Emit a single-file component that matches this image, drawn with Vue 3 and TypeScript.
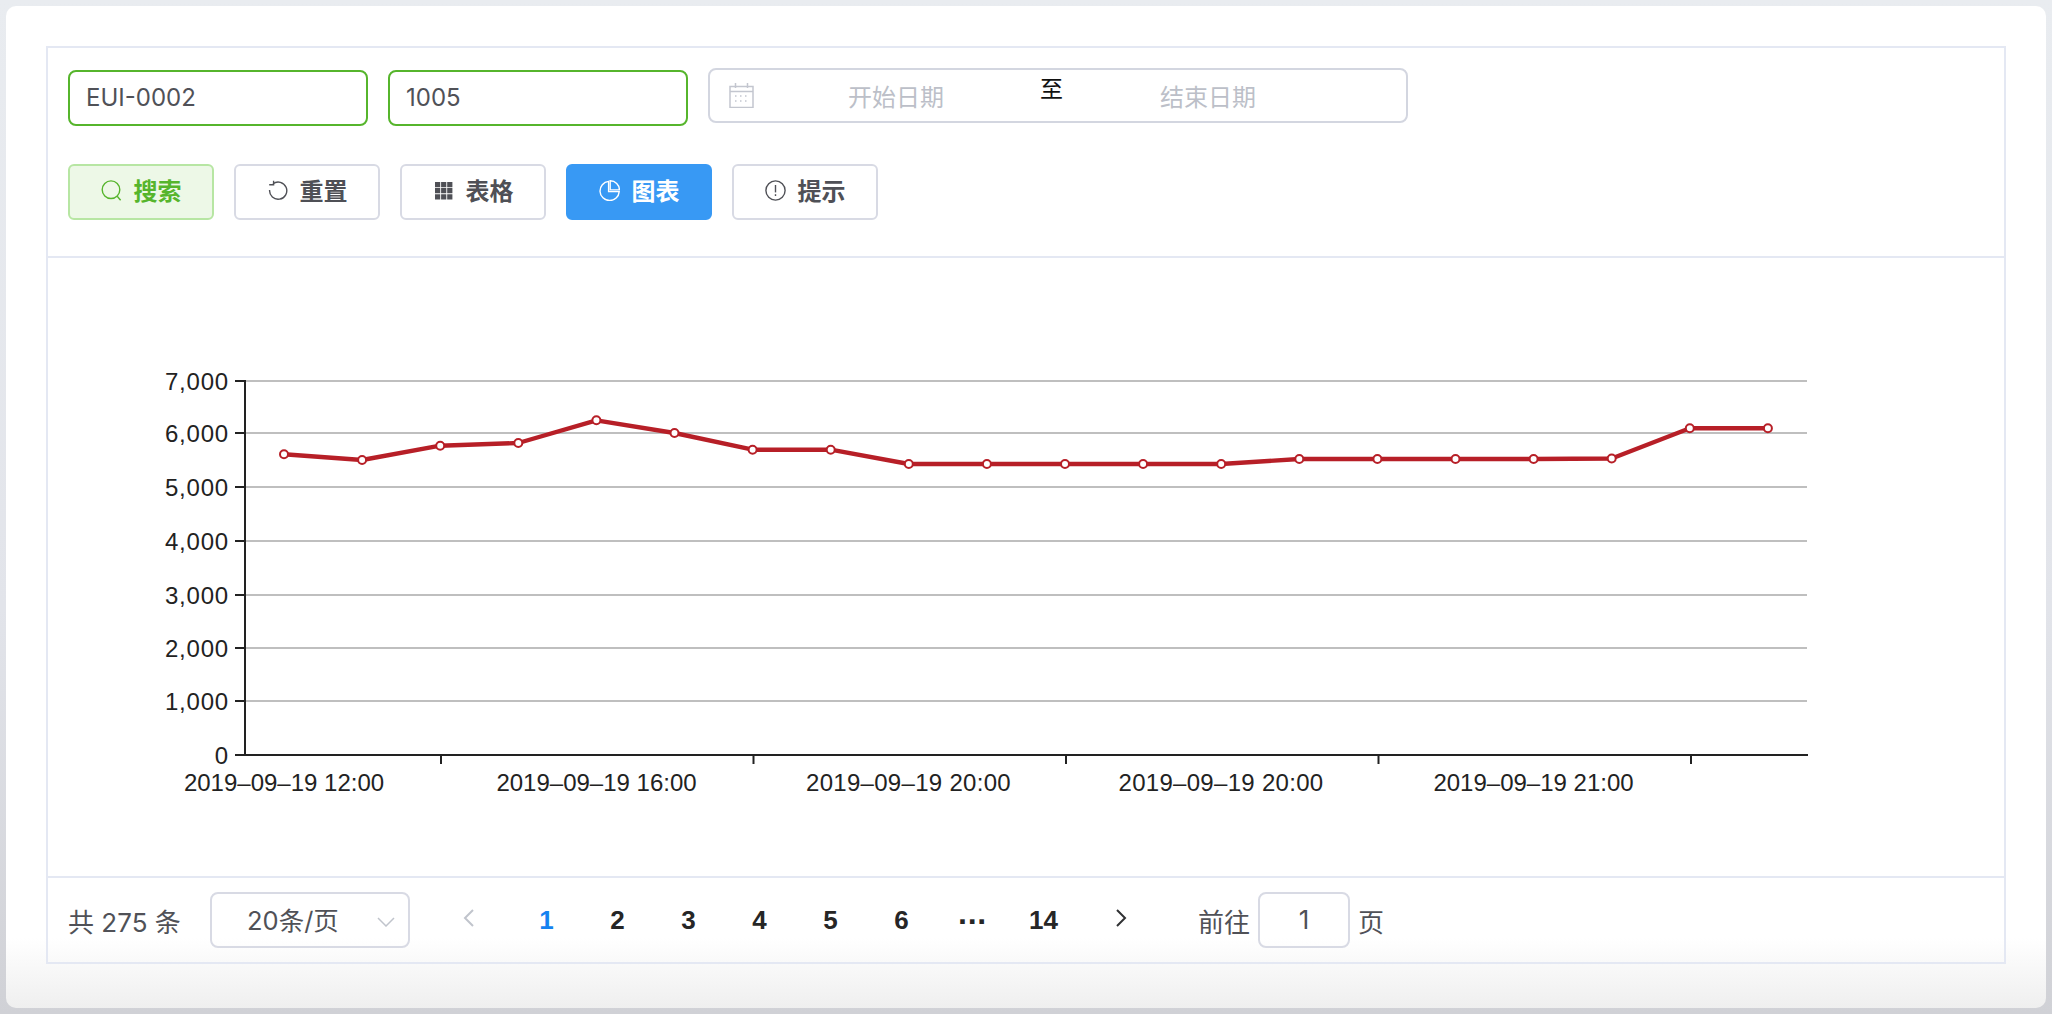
<script setup lang="ts">
const buttons = [
  { label: '搜索', icon: 'search', kind: 'success' },
  { label: '重置', icon: 'refresh', kind: '' },
  { label: '表格', icon: 'grid', kind: '' },
  { label: '图表', icon: 'pie', kind: 'primary' },
  { label: '提示', icon: 'warning', kind: '' },
]
const gridY = [381, 433, 487, 541, 595, 648, 701]
const yLabels = [
  { t: '7,000', y: 381 }, { t: '6,000', y: 433 }, { t: '5,000', y: 487 }, { t: '4,000', y: 541 },
  { t: '3,000', y: 595 }, { t: '2,000', y: 648 }, { t: '1,000', y: 701 }, { t: '0', y: 755 },
]
const xTicks = [441, 753.5, 1066, 1378.5, 1691]
const xLabels = [
  { t: '2019–09–19 12:00', x: 284, wide: false },
  { t: '2019–09–19 16:00', x: 596.5, wide: false },
  { t: '2019–09–19 20:00', x: 908.5, wide: true },
  { t: '2019–09–19 20:00', x: 1221, wide: true },
  { t: '2019–09–19 21:00', x: 1533.5, wide: false },
]
const ys = [454.3, 460, 445.7, 443, 420.3, 433, 449.7, 449.7, 464, 464, 464, 464, 464, 459, 459, 459, 459, 458.5, 428.3, 428.3]
const points = ys.map((y, i) => ({ x: 284 + 78.1 * i, y }))
const line = points.map((p) => `${p.x},${p.y}`).join(' ')
const pages = ['1', '2', '3', '4', '5', '6', '···', '14']
</script>

<template>
  <main class="card">
    <section class="box">
      <header class="toolbar">
        <div class="filters">
          <div class="input focus">EUI-0002</div>
          <div class="input focus">1005</div>
          <div class="range">
            <svg class="cal" viewBox="0 0 25 25" fill="none" stroke="#c3c6cf" stroke-width="1.5">
              <rect x="1" y="3.5" width="23" height="21" />
              <path d="M1 8.5h23M6.5 0v5M18.5 0v5" />
              <path d="M6 13h3M11 13h3M16 13h3M6 18h3M11 18h3M16 18h3" stroke-dasharray="1.5 1.5" />
            </svg>
            <span class="ph ph1">开始日期</span>
            <span class="sep">至</span>
            <span class="ph ph2">结束日期</span>
          </div>
        </div>
        <div class="actions">
          <button v-for="b in buttons" :key="b.label" class="btn" :class="b.kind">
            <svg class="ico" viewBox="0 0 21 21" fill="none" stroke="currentColor" stroke-width="1.4">
              <template v-if="b.icon === 'search'">
                <circle cx="10" cy="9.7" r="8.8" />
                <path d="M16.2 16.2l3.4 4" />
              </template>
              <template v-else-if="b.icon === 'refresh'">
                <path d="M6 3.8A8.6 8.6 0 1 1 2.6 10" />
                <path d="M6.6 0.8v4H2.2" />
              </template>
              <template v-else-if="b.icon === 'grid'">
                <path fill="currentColor" stroke="none" d="M2 2h5.2v5.2H2zM8.1 2h5.2v5.2H8.1zM14.2 2h5.2v5.2h-5.2zM2 8.1h5.2v5.2H2zM8.1 8.1h5.2v5.2H8.1zM14.2 8.1h5.2v5.2h-5.2zM2 14.2h5.2v5.2H2zM8.1 14.2h5.2v5.2H8.1zM14.2 14.2h5.2v5.2h-5.2z" />
              </template>
              <template v-else-if="b.icon === 'pie'">
                <path d="M9.6 1.4A9.6 9.6 0 1 0 20.2 11.6H9.6z" />
                <path d="M11.2 0.7A9.2 9.2 0 0 1 20.4 9.9h-9.2z" />
              </template>
              <template v-else>
                <circle cx="10.5" cy="10.5" r="9.6" />
                <path d="M10.5 5v7.4" />
                <path d="M10.5 14.2v1.8" />
              </template>
            </svg>
            <span class="btn-text">{{ b.label }}</span>
          </button>
        </div>
      </header>

      <div class="chart">
        <svg class="plot" viewBox="48 258 1956 618">
          <line v-for="y in gridY" :key="y" x1="246" :y1="y" x2="1807" :y2="y" stroke="#bfbfbf" stroke-width="2" />
          <path d="M245 380v376" stroke="#222" stroke-width="2" fill="none" />
          <path d="M235 755H1808" stroke="#222" stroke-width="2" fill="none" />
          <line v-for="l in yLabels" :key="l.t" x1="235" :y1="l.y" x2="245" :y2="l.y" stroke="#222" stroke-width="2" />
          <line v-for="x in xTicks" :key="x" :x1="x" y1="755" :x2="x" y2="764" stroke="#222" stroke-width="2" />
          <text v-for="l in yLabels" :key="'y' + l.t" x="229" :y="l.y + 8.5" class="tick ylab" text-anchor="end">{{ l.t }}</text>
          <text v-for="(l, i) in xLabels" :key="i" :x="l.x" y="790.5" class="tick" :class="{ wide: l.wide }" text-anchor="middle">{{ l.t }}</text>
          <polyline :points="line" fill="none" stroke="#b71f27" stroke-width="4.4" stroke-linejoin="round" />
          <circle v-for="(p, i) in points" :key="i" :cx="p.x" :cy="p.y" r="4" fill="#fff" stroke="#b71f27" stroke-width="2" />
        </svg>
      </div>

      <footer class="pager">
        <span class="total">共 275 条</span>
        <div class="size">
          <span>20条/页</span>
          <svg class="caret" viewBox="0 0 18 10" fill="none" stroke="#c0c4cc" stroke-width="1.5"><path d="M1 1l8 8 8-8" /></svg>
        </div>
        <svg class="prev" viewBox="0 0 11 18" fill="none" stroke="#c0c4cc" stroke-width="2"><path d="M10 1L2 9l8 8" /></svg>
        <ul class="pages">
          <li v-for="(p, i) in pages" :key="p" :class="{ active: i === 0, more: p === '···' }">{{ p }}</li>
        </ul>
        <svg class="next" viewBox="0 0 11 18" fill="none" stroke="#303133" stroke-width="2"><path d="M1 1l8 8-8 8" /></svg>
        <span class="goto">前往</span>
        <div class="jump">1</div>
        <span class="unit">页</span>
      </footer>
    </section>
  </main>
</template>

<style scoped>
.card {
  box-sizing: border-box;
  width: 2040px;
  height: 1002px;
  margin: 6px;
  padding: 40px 40px 44px;
  border-radius: 10px;
  background: linear-gradient(to bottom, #fff 0, #fff 93%, #efefef 100%);
  font-family: Inter, "Noto Sans CJK SC", sans-serif;
}
.box {
  box-sizing: border-box;
  height: 918px;
  border: 2px solid #e4e8f3;
  display: flex;
  flex-direction: column;
}
.toolbar {
  box-sizing: border-box;
  height: 210px;
  padding: 20px 20px 0;
  border-bottom: 2px solid #e4e8f3;
}
.filters {
  display: flex;
  align-items: flex-start;
  gap: 20px;
  height: 58px;
}
.input {
  box-sizing: border-box;
  width: 300px;
  height: 56px;
  margin-top: 2px;
  padding-left: 16px;
  border: 2px solid #56b52c;
  border-radius: 8px;
  font-size: 24px;
  line-height: 52px;
  color: #505157;
}
.range {
  box-sizing: border-box;
  position: relative;
  width: 700px;
  height: 55px;
  border: 2px solid #d3d6e0;
  border-radius: 8px;
}
.cal {
  position: absolute;
  left: 19px;
  top: 13px;
  width: 25px;
  height: 25px;
}
.ph {
  position: absolute;
  top: 12px;
  font-size: 24px;
  line-height: 32px;
  color: #bcbfc8;
}
.ph1 { left: 138px; }
.ph2 { left: 450px; }
.sep {
  position: absolute;
  left: 330px;
  top: 3px;
  font-size: 23px;
  line-height: 32px;
  color: #111;
}
.actions {
  display: flex;
  gap: 20px;
  margin-top: 38px;
}
.btn {
  box-sizing: border-box;
  display: flex;
  align-items: center;
  justify-content: center;
  gap: 12px;
  width: 146px;
  height: 56px;
  padding: 0 0 3px;
  border: 2px solid #d8dae4;
  border-radius: 6px;
  background: #fff;
  color: #4f5056;
  font-family: inherit;
  font-size: 24px;
  font-weight: 700;
}
.btn-text {
  margin-top: -2px;
}
.btn.success {
  background: #edf8e7;
  border-color: #b7e6a3;
  color: #56b52c;
}
.btn.primary {
  background: #3899f4;
  border-color: #3899f4;
  color: #fff;
}
.ico {
  width: 21px;
  height: 21px;
  flex: none;
}
.chart {
  height: 618px;
  border-bottom: 2px solid #e4e8f3;
  box-sizing: content-box;
}
.plot {
  display: block;
  width: 1956px;
  height: 618px;
}
.tick {
  font-family: "Liberation Sans", sans-serif;
  font-size: 24px;
  fill: #222;
}
.ylab {
  letter-spacing: 0.8px;
}
.wide {
  letter-spacing: 0.3px;
}
.pager {
  flex: 1;
  display: flex;
  align-items: center;
  padding-left: 20px;
  font-size: 26px;
  color: #505157;
}
.total {
  width: 142px;
  flex: none;
  white-space: nowrap;
}
.size {
  box-sizing: border-box;
  position: relative;
  flex: none;
  width: 200px;
  height: 56px;
  padding-left: 35px;
  border: 2px solid #d8dae4;
  border-radius: 8px;
  font-size: 25.5px;
  line-height: 54px;
}
.caret {
  position: absolute;
  left: 165px;
  top: 23px;
  width: 18px;
  height: 10px;
}
.prev {
  flex: none;
  width: 11px;
  height: 18px;
  margin-left: 53px;
  margin-top: -4px;
}
.pages {
  display: flex;
  flex: none;
  list-style: none;
  margin: 0 0 0 37px;
  padding: 0;
}
.pages li {
  width: 71px;
  text-align: center;
  font-family: "Liberation Sans", sans-serif;
  font-weight: 700;
  font-size: 26px;
  color: #262626;
}
.pages li.active {
  color: #1482f0;
}
.pages li.more {
  font-size: 32px;
  line-height: 26px;
  letter-spacing: -1px;
  transform: translateY(3px);
}
.next {
  flex: none;
  width: 11px;
  height: 18px;
  margin-left: 37px;
  margin-top: -4px;
}
.goto {
  flex: none;
  margin-left: 71px;
}
.jump {
  box-sizing: border-box;
  flex: none;
  width: 92px;
  height: 56px;
  margin-left: 8px;
  border: 2px solid #d8dae4;
  border-radius: 8px;
  text-align: center;
  line-height: 52px;
}
.unit {
  flex: none;
  margin-left: 8px;
}
</style>

<style>
html, body {
  margin: 0;
  height: 1014px;
  overflow: hidden;
}
body {
  background: linear-gradient(to bottom, #e9ecf0 0, #e2e4ea 60%, #d0d1d6 100%);
}
</style>
